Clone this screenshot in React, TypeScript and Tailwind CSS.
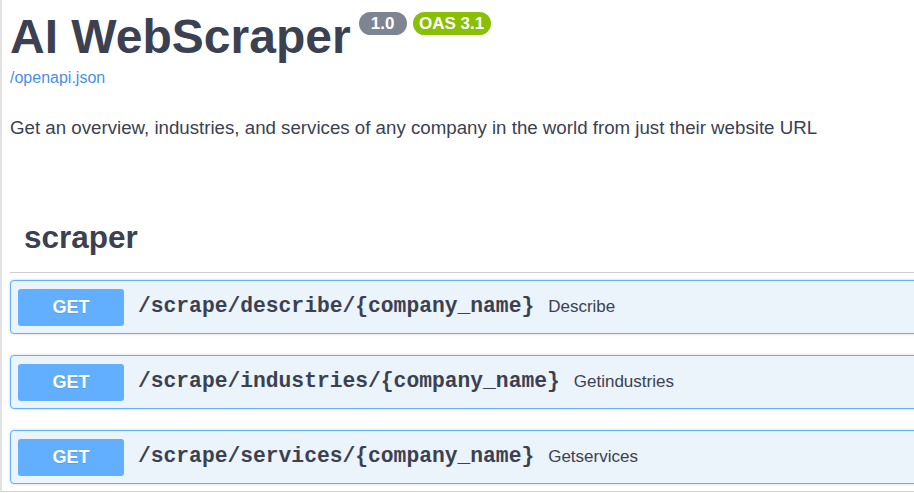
import React from "react";

const ops = [
  { path: "/scrape/describe/{company_name}", summary: "Describe" },
  { path: "/scrape/industries/{company_name}", summary: "Getindustries" },
  { path: "/scrape/services/{company_name}", summary: "Getservices" },
];

export default function App() {
  return (
    <div className="w-[914px] h-[493px] overflow-hidden bg-white font-['Liberation_Sans',Arial,sans-serif] text-[#3b4151]">
      <div className="h-[492px] w-[980px] border-l-2 border-b border-l-[#e2e2e2] border-b-[#d4d4d4] pl-[8px]">
        <div className="flex items-start pt-[13px]">
          <h1 className="text-[48px] leading-[47px] font-bold">AI WebScraper</h1>
          <div className="ml-[8px] mt-[-1px] flex gap-[6px]">
            <span className="flex h-[23px] w-[48px] items-center justify-center rounded-full bg-[#7d8492] text-[17px] font-bold text-white">
              1.0
            </span>
            <span className="flex h-[23px] w-[78px] items-center justify-center rounded-full bg-[#89bf04] text-[17px] font-bold text-white">
              OAS 3.1
            </span>
          </div>
        </div>
        <a className="mt-[8px] block text-[16px] leading-[20px] text-[#4990e2]">/openapi.json</a>
        <p className="mt-[28px] text-[18.7px] leading-[24px]">
          Get an overview, industries, and services of any company in the world from just their website URL
        </p>
        <div className="mt-[77px] border-b border-[#cdced2] pb-[15px]">
          <h2 className="pl-[14px] text-[31.5px] leading-[40px] font-bold">scraper</h2>
        </div>
        <div className="mt-[7px] flex flex-col gap-[21px]">
          {ops.map((op) => (
            <div
              key={op.path}
              className="flex h-[54px] items-center rounded-[4px] border border-[#61affe] bg-[#ebf3fb] pl-[7px] shadow-[0_0_3px_rgba(0,0,0,0.19)]"
            >
              <div className="flex h-[37px] w-[106px] items-center justify-center rounded-[3px] bg-[#61affe] text-[18px] font-bold text-white [text-shadow:0_1px_0_rgba(0,0,0,0.1)]">
                GET
              </div>
              <span className="ml-[14px] font-['Liberation_Mono',monospace] text-[21.3px] font-bold">
                {op.path}
              </span>
              <span className="ml-[14px] text-[17px]">{op.summary}</span>
            </div>
          ))}
        </div>
      </div>
    </div>
  );
}
